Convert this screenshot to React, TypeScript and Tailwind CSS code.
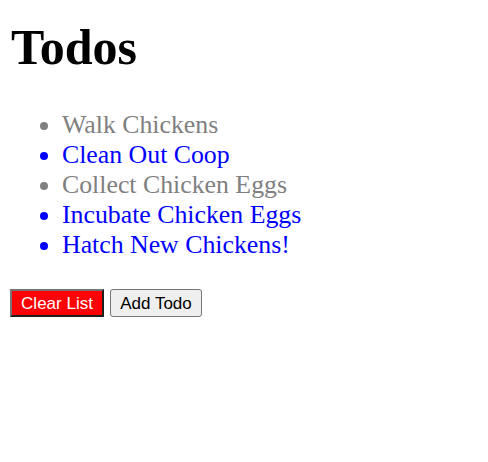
import { useState } from 'react';

type Todo = { text: string; done: boolean };

const initialTodos: Todo[] = [
    { text: 'Walk Chickens', done: true },
    { text: 'Clean Out Coop', done: false },
    { text: 'Collect Chicken Eggs', done: true },
    { text: 'Incubate Chicken Eggs', done: false },
    { text: 'Hatch New Chickens!', done: false },
];

const App = () => {
    const [todos, setTodos] = useState<Todo[]>(initialTodos);

    const toggle = (index: number) => {
        setTodos((prev) => prev.map((t, i) => (i === index ? { ...t, done: !t.done } : t)));
    };

    return (
        <div className="min-h-screen bg-white px-[10px] pt-[19px] font-['Liberation_Serif',serif]">
            <h1 className="pl-[1px] text-[50px] leading-[57px] font-bold text-black">Todos</h1>

            <ul className="mt-[34px] list-disc pl-[52px] text-[25.8px] leading-[30px]">
                {todos.map((todo, index) => (
                    <li
                        key={index}
                        onClick={() => toggle(index)}
                        className={`cursor-pointer ${todo.done ? 'text-[#808080]' : 'text-[#0000ff]'}`}
                    >
                        {todo.text}
                    </li>
                ))}
            </ul>

            {/* Actions */}
            <div className="mt-[29px] flex gap-[6px] font-['Liberation_Sans',Arial,sans-serif] text-[17px] leading-none">
                <button
                    onClick={() => setTodos([])}
                    className="h-[28px] w-[94px] border-2 border-t-[#767676] border-l-[#767676] border-r-[#1e1e1e] border-b-[#1e1e1e] bg-[#ff0000] text-white"
                >
                    Clear List
                </button>
                <button
                    onClick={() => setTodos((prev) => [...prev, { text: 'New Todo', done: false }])}
                    className="h-[28px] w-[92px] rounded-[3px] border border-[#767676] bg-[#efefef] text-black"
                >
                    Add Todo
                </button>
            </div>
        </div>
    );
};

export default App;
